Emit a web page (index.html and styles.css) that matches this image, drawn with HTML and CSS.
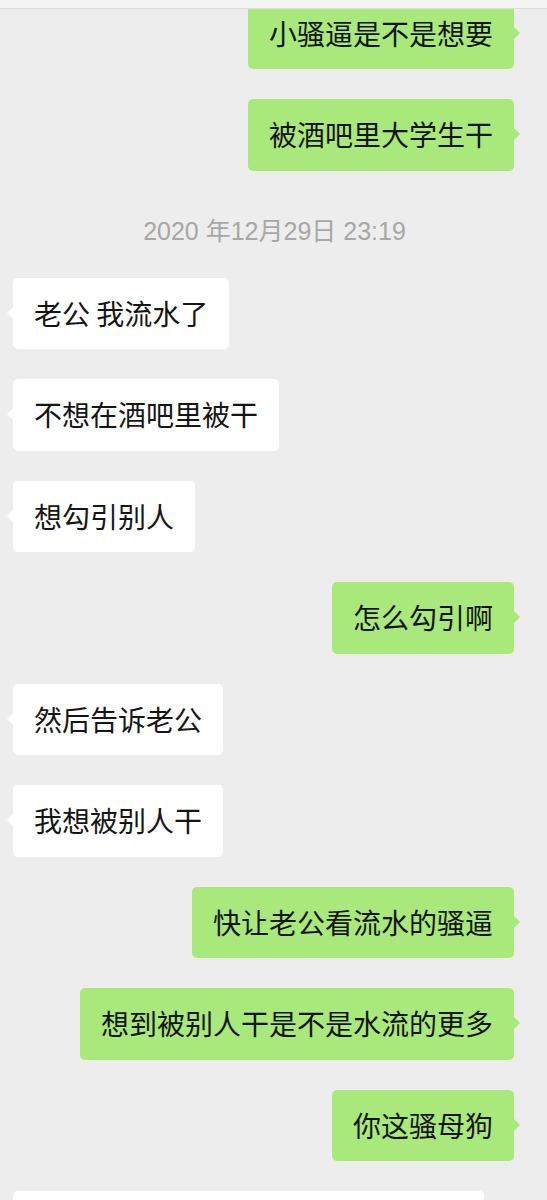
FILE: index.html
```html
<!DOCTYPE html>
<html lang="zh-CN">

<head>
  <meta charset="UTF-8" />
  <meta name="viewport" content="width=device-width, initial-scale=1.0" />
  <title>聊天记录</title>
  <link rel="stylesheet" href="styles.css">
</head>

<body>
  <div class="topbar"></div>

  <div class="chat">
    <div class="row me first">
      <div class="bubble">小骚逼是不是想要</div>
    </div>
    <div class="row me">
      <div class="bubble">被酒吧里大学生干</div>
    </div>

    <div class="time">2020 年12月29日 23:19</div>

    <div class="row them">
      <div class="bubble">老公 我流水了</div>
    </div>
    <div class="row them">
      <div class="bubble">不想在酒吧里被干</div>
    </div>
    <div class="row them">
      <div class="bubble">想勾引别人</div>
    </div>
    <div class="row me">
      <div class="bubble">怎么勾引啊</div>
    </div>
    <div class="row them">
      <div class="bubble">然后告诉老公</div>
    </div>
    <div class="row them">
      <div class="bubble">我想被别人干</div>
    </div>
    <div class="row me">
      <div class="bubble">快让老公看流水的骚逼</div>
    </div>
    <div class="row me">
      <div class="bubble">想到被别人干是不是水流的更多</div>
    </div>
    <div class="row me">
      <div class="bubble">你这骚母狗</div>
    </div>
    <!-- last message is cut off by the bottom of the screen -->
    <div class="row them">
      <div class="bubble cut">&nbsp;</div>
    </div>
  </div>
</body>

</html>
```

FILE: styles.css
```css
body {
  margin: 0;
  background: #ededed;
  font-family: "Noto Sans CJK SC", "Noto Sans", sans-serif;
  color: #151515;
  height: 1200px;
  overflow: hidden;
}

.topbar {
  height: 8px;
  background: #f4f4f4;
  border-bottom: 1px solid #dddddd;
}

.chat {
  display: flex;
  flex-direction: column;
  gap: 30px;
  padding: 0 33px 0 13px;
  height: 1191px;
  overflow: hidden;
}

.row {
  display: flex;
}

.row.me {
  justify-content: flex-end;
}

.row.first {
  margin-top: -11.5px;
}

.bubble {
  position: relative;
  font-size: 28px;
  line-height: 39.5px;
  padding: 16px 21px;
  border-radius: 5px;
  white-space: nowrap;
}

.me .bubble {
  background: #a9e97b;
}

.them .bubble {
  background: #ffffff;
}

.bubble::after {
  content: "";
  position: absolute;
  top: 28px;
  border: 7px solid transparent;
}

.me .bubble::after {
  right: -13px;
  border-left-color: #a9e97b;
}

.them .bubble::after {
  left: -13px;
  border-right-color: #ffffff;
}

.bubble.cut {
  width: 429px;
}

.time {
  margin: 0 -33px 0 -11px;
  text-align: center;
  font-family: "Liberation Sans", "Noto Sans CJK SC", sans-serif;
  font-size: 25px;
  line-height: 34px;
  padding-top: 13px;
  color: #a7a7a7;
}
```
